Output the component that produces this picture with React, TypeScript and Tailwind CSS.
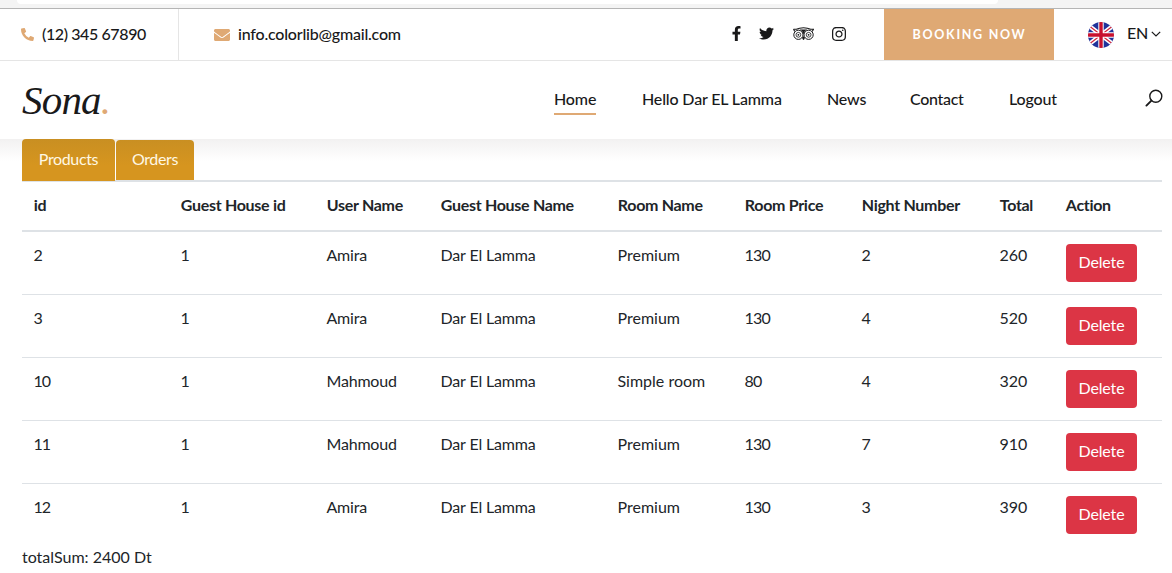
import React from "react";
import { FaFacebookF, FaTwitter, FaInstagram, FaPhoneAlt, FaEnvelope } from "react-icons/fa";

const columns: string[] = [
  "id",
  "Guest House id",
  "User Name",
  "Guest House Name",
  "Room Name",
  "Room Price",
  "Night Number",
  "Total",
  "Action",
];

const orders: string[][] = [
  ["2", "1", "Amira", "Dar El Lamma", "Premium", "130", "2", "260"],
  ["3", "1", "Amira", "Dar El Lamma", "Premium", "130", "4", "520"],
  ["10", "1", "Mahmoud", "Dar El Lamma", "Simple room", "80", "4", "320"],
  ["11", "1", "Mahmoud", "Dar El Lamma", "Premium", "130", "7", "910"],
  ["12", "1", "Amira", "Dar El Lamma", "Premium", "130", "3", "390"],
];

const cellTracking: string[] = [
  "tracking-[-1px]",
  "tracking-[-0.15px]",
  "tracking-[-0.2px]",
  "tracking-[-0.15px]",
  "tracking-[0px]",
  "tracking-[-0.8px]",
  "tracking-[-0.15px]",
  "tracking-[0px]",
];

function UkFlag() {
  return (
    <svg viewBox="0 0 26 26" className="size-[26px]">
      <defs>
        <clipPath id="flag-disc">
          <circle cx="13" cy="13" r="13" />
        </clipPath>
      </defs>
      <g clipPath="url(#flag-disc)">
        <rect width="26" height="26" fill="#20339b" />
        <path d="M0 3L26 23M0 23L26 3" stroke="#fff" strokeWidth="4.2" />
        <path d="M0 3L26 23M0 23L26 3" stroke="#d2253c" strokeWidth="1.3" />
        <path d="M13 0V26M0 13H26" stroke="#fff" strokeWidth="5.4" />
        <path d="M13 0V26M0 13H26" stroke="#c8102e" strokeWidth="3.4" />
      </g>
    </svg>
  );
}

function OwlIcon() {
  return (
    <svg viewBox="0 0 21 14" className="ml-[19px] h-3.5 w-[21px]" fill="none" stroke="currentColor">
      <path d="M0.5 2.3H3.4C7.3 0.2 13.7 0.2 17.6 2.3H20.5L19.2 4.5" strokeWidth="1.1" />
      <path d="M0.5 2.3L1.8 4.5" strokeWidth="1.1" />
      <circle cx="5.4" cy="7.8" r="4.6" strokeWidth="1" />
      <circle cx="15.6" cy="7.8" r="4.6" strokeWidth="1" />
      <circle cx="5.4" cy="7.8" r="2.4" strokeWidth="0.8" />
      <circle cx="15.6" cy="7.8" r="2.4" strokeWidth="0.8" />
      <circle cx="5.4" cy="7.8" r="0.9" fill="currentColor" stroke="none" />
      <circle cx="15.6" cy="7.8" r="0.9" fill="currentColor" stroke="none" />
      <path d="M7.2 2.6C9 3.6 10 5 10.5 6.8C11 5 12 3.6 13.8 2.6M9.3 10.8L10.5 13L11.7 10.8L10.5 9.6Z" fill="currentColor" strokeWidth="0.6" />
    </svg>
  );
}

export default function App() {
  return (
    <div className="h-[573px] w-[1172px] overflow-hidden bg-white font-['Lato','Liberation_Sans',sans-serif] text-[16px] leading-6 text-[#212529] [font-variant-ligatures:none]">
      <div className="h-[9px] border-b border-[#b5b5b5] bg-[#f4f4f4] pl-[17px]">
        <div className="h-1 w-[981px] rounded-b-[10px] bg-white" />
      </div>
      <div className="flex h-[52px] border-b border-[#e5e5e5] font-medium text-[#19191a]">
        <div className="flex w-[179px] items-center border-r border-[#e5e5e5] pl-[21px]">
          <FaPhoneAlt className="size-[13px] text-[#dfa974]" />
          <span className="ml-2 whitespace-nowrap pb-0.5 tracking-[-0.4px]">(12) 345 67890</span>
        </div>
        <div className="flex flex-1 items-center pl-[35px]">
          <FaEnvelope className="size-4 text-[#dfa974]" />
          <span className="ml-2 whitespace-nowrap pb-0.5 tracking-[-0.2px]">info.colorlib@gmail.com</span>
        </div>
        <div className="flex w-[155px] items-center pb-0.5">
          <FaFacebookF className="size-[15px]" />
          <FaTwitter className="ml-[15px] size-[15px]" />
          <OwlIcon />
          <FaInstagram className="ml-[17px] size-4" />
        </div>
        <div className="flex h-[51px] w-[170px] items-center justify-center bg-[#dfa974] pl-px text-[12.5px] font-bold tracking-[1.7px] text-white">
          BOOKING NOW
        </div>
        <div className="flex w-[118px] items-center pl-[34px]">
          <UkFlag />
          <span className="ml-[13px] pb-[3px] tracking-[-0.3px]">EN</span>
          <svg viewBox="0 0 10 6" className="mb-0.5 ml-[3px] h-1.5 w-2.5" fill="none" stroke="currentColor" strokeWidth="1.2">
            <path d="M0.8 0.8L5 5L9.2 0.8" />
          </svg>
        </div>
      </div>
      <header className="flex h-[78px] items-center pl-[22px] font-medium text-[#19191a]">
        <div className="w-[532px] font-['Liberation_Serif',serif] text-[41px] font-normal italic leading-[50px] tracking-[-0.8px]">
          Sona<span className="text-[#dfa974]">.</span>
        </div>
        <nav className="flex flex-1 whitespace-nowrap pt-px tracking-[-0.15px]">
          <a className="w-[88px]">
            <span className="inline-block border-b-2 border-[#dfa974] pb-0.5">Home</span>
          </a>
          <a className="w-[185px]">Hello Dar EL Lamma</a>
          <a className="w-[83px]">News</a>
          <a className="w-[99px] tracking-[-0.3px]">Contact</a>
          <a>Logout</a>
        </nav>
        <svg viewBox="0 0 18 18" className="mb-[5px] mr-[9px] size-[18px]" fill="none" stroke="currentColor" strokeWidth="1.4">
          <circle cx="10.8" cy="7.2" r="6" />
          <path d="M6.4 11.6L1.4 16.6" strokeWidth="1.9" strokeLinecap="round" />
        </svg>
      </header>
      <main className="bg-[linear-gradient(to_bottom,#f2f1f1_0px,#ffffff_22px)] pl-[22px] pr-[10px]">
        <div className="flex h-[41px] gap-px tracking-[-0.35px] text-[#fff8e4]">
          <a className="-mb-px w-[93px] rounded-t bg-[linear-gradient(to_bottom,#c98f22,#d6951f_26px)] pt-2 text-center">Products</a>
          <a className="mt-px w-[78px] rounded-t bg-[linear-gradient(to_bottom,#c98f22,#d6951f_26px)] pt-[7px] text-center">Orders</a>
        </div>
        <table className="w-full table-fixed border-separate border-spacing-0 text-left">
          <colgroup>
            <col className="w-[147px]" />
            <col className="w-[146px]" />
            <col className="w-[114px]" />
            <col className="w-[177px]" />
            <col className="w-[127px]" />
            <col className="w-[117px]" />
            <col className="w-[138px]" />
            <col className="w-[66px]" />
            <col className="w-[108px]" />
          </colgroup>
          <thead>
            <tr>
              {columns.map((name) => (
                <th key={name} className="h-[52px] whitespace-nowrap border-y-2 border-[#dee2e6] pb-0.5 pl-[11.8px] font-bold tracking-[-0.3px]">
                  {name}
                </th>
              ))}
            </tr>
          </thead>
          <tbody className="align-top [&>tr+tr>td]:border-t [&>tr+tr>td]:border-[#dee2e6]">
            {orders.map((row) => (
              <tr key={row[0]}>
                {row.map((value, i) => (
                  <td key={i} className={"whitespace-nowrap pl-[11.5px] pt-[11px] " + cellTracking[i]}>{value}</td>
                ))}
                <td className="p-3">
                  <button className="block h-[38px] w-[71px] rounded bg-[#dc3545] pb-0.5 tracking-[-0.15px] text-white">Delete</button>
                </td>
              </tr>
            ))}
          </tbody>
        </table>
        <p className="-mt-px">totalSum: 2400 Dt</p>
      </main>
    </div>
  );
}
